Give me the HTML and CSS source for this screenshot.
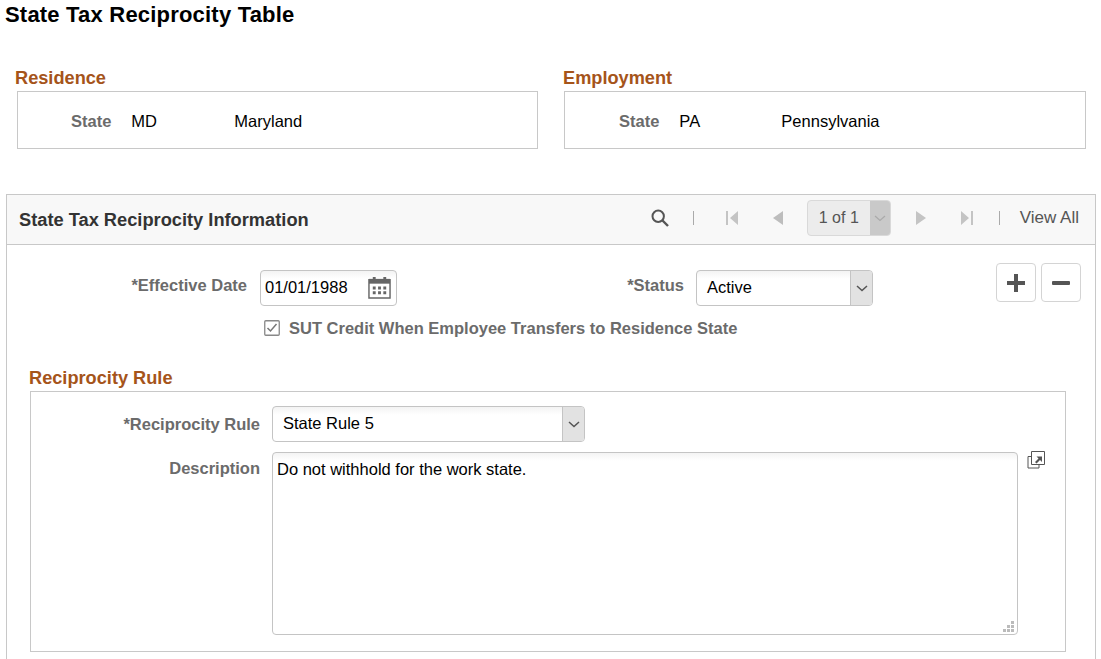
FILE: index.html
```html
<!doctype html>
<html>
<head>
<meta charset="utf-8">
<title>State Tax Reciprocity Table</title>
<link rel="stylesheet" href="styles.css">
</head>
<body>
	<h1 class="pageTitle">State Tax Reciprocity Table</h1>
	<div class="topGroups">
		<div class="group">
			<h2 class="groupTitle">Residence</h2>
			<div class="groupBox">
				<span class="lbl">State</span>
				<span class="code">MD</span>
				<span>Maryland</span>
			</div>
		</div>
		<div class="group">
			<h2 class="groupTitle">Employment</h2>
			<div class="groupBox">
				<span class="lbl">State</span>
				<span class="code">PA</span>
				<span>Pennsylvania</span>
			</div>
		</div>
	</div>
	<div class="panel">
		<div class="panelHead">
			<h2 class="panelTitle">State Tax Reciprocity Information</h2>
			<div class="pager">
				<svg class="searchIcon" width="18" height="18" viewBox="0 0 18 18"><circle cx="7.2" cy="7.2" r="5.7" fill="none" stroke="#555" stroke-width="2"/><path d="M11.5 11.5L17 17" stroke="#555" stroke-width="2.4"/></svg>
				<i class="pipe first"></i>
				<svg class="navFirst" width="12" height="14" viewBox="0 0 12 14"><path d="M0 0h2v14H0zM12 0v14L4 7z" fill="#c4c4c4"/></svg>
				<svg class="navPrev" width="10" height="14" viewBox="0 0 10 14"><path d="M10 0v14L0 7z" fill="#bdbdbd"/></svg>
				<div class="pageSelect"><span class="pageText">1 of 1</span><span class="pageArrow"><svg width="12" height="7" viewBox="0 0 12 7"><path d="M1 1l5 4.5L11 1" fill="none" stroke="#aaa" stroke-width="1.2"/></svg></span></div>
				<svg class="navNext" width="10" height="14" viewBox="0 0 10 14"><path d="M0 0v14l10-7z" fill="#c4c4c4"/></svg>
				<svg class="navLast" width="12" height="14" viewBox="0 0 12 14"><path d="M0 0v14l8-7zM10 0h2v14h-2z" fill="#c4c4c4"/></svg>
				<i class="pipe last"></i>
				<span class="viewAll">View All</span>
			</div>
		</div>
		<div class="panelBody">
			<div class="rowMain">
				<label class="lbl dateLbl">*Effective Date</label>
				<div class="field dateField">
					<span>01/01/1988</span>
					<svg width="23" height="23" viewBox="0 0 24 24"><path d="M1 4h22v19H1z" fill="#fff" stroke="#666" stroke-width="1.5"/><path d="M1 3h22v5H1z" fill="#666"/><path d="M5 1h3v4H5zM16 1h3v4h-3z" fill="#666"/><path d="M5 11h3v3H5zM10.500 11h3v3h-3zM16 11h3v3h-3zM5 16h3v3H5zM10.500 16h3v3h-3zM16 16h3v3h-3z" fill="#666"/></svg>
				</div>
				<label class="lbl statusLbl">*Status</label>
				<div class="field selectField statusField">
					<span class="fieldText">Active</span>
					<span class="selArrow"><svg width="12" height="7" viewBox="0 0 12 7"><path d="M1 1l5 4.500L11 1" fill="none" stroke="#555" stroke-width="1.500"/></svg></span>
				</div>
				<div class="rowBtns">
					<div class="rowBtn"><svg width="18" height="18" viewBox="0 0 18 18"><path d="M7 0h4v7h7v4h-7v7H7v-7H0V7h7z" fill="#555"/></svg></div>
					<div class="rowBtn"><svg width="18" height="4" viewBox="0 0 18 4"><rect width="18" height="4" rx="1" fill="#555"/></svg></div>
				</div>
			</div>
			<div class="checkRow">
				<svg width="16" height="16" viewBox="0 0 16 16"><rect x=".75" y=".75" width="14.500" height="14.500" rx="1" fill="#fff" stroke="#888" stroke-width="1.300"/><path d="M3.500 8l3 3 6-7" fill="none" stroke="#777" stroke-width="1.500"/></svg>
				<span class="lbl">SUT Credit When Employee Transfers to Residence State</span>
			</div>
			<h2 class="groupTitle ruleTitle">Reciprocity Rule</h2>
			<div class="ruleBox">
				<div class="ruleRow">
					<label class="lbl ruleLbl">*Reciprocity Rule</label>
					<div class="field selectField ruleField">
						<span class="fieldText">State Rule 5</span>
						<span class="selArrow"><svg width="12" height="7" viewBox="0 0 12 7"><path d="M1 1l5 4.500L11 1" fill="none" stroke="#555" stroke-width="1.500"/></svg></span>
					</div>
				</div>
				<div class="descRow">
					<label class="lbl ruleLbl descLbl">Description</label>
					<div class="descArea">
						Do not withhold for the work state.
						<svg class="grip" width="12" height="12" viewBox="0 0 12 12"><path d="M8 0h3v3H8zM4 4h3v3H4zM8 4h3v3H8zM0 8h3v3H0zM4 8h3v3H4zM8 8h3v3H8z" fill="#bbb"/></svg>
					</div>
					<svg class="popIcon" width="18" height="18" viewBox="0 0 18 18"><path d="M1 5.500h11v11.500H1z" fill="#fff" stroke="#555"/><path d="M4.500 .5h13v13h-13z" fill="#fff" stroke="#555"/><path d="M8 11l3.500-3.500L9.500 5.500H15V11l-2-2-3.500 3.500z" fill="#555"/></svg>
				</div>
			</div>
		</div>
	</div>
</body>
</html>
```

FILE: styles.css
```css
html,
body {
	height: 659px;
	overflow: hidden;
}
body {
	margin: 0;
	background: #fff;
	color: #000;
	font: 16.5px/20px "Liberation Sans", Arial, sans-serif;
}
h1,
h2 {
	margin: 0;
}
svg {
	flex: none;
}
.pageTitle {
	padding: 3px 0 0 5px;
	height: 27px;
	font-size: 22px;
	line-height: 24px;
	letter-spacing: .2px;
}
.lbl {
	font-weight: bold;
	color: #6b6b6b;
}
.topGroups {
	display: flex;
	margin-top: 38px;
	height: 126px;
}
.group {
	flex: none;
	width: 548px;
	padding-left: 15px;
}
.group + .group {
	width: 538px;
	padding-left: 0;
}
.groupTitle {
	font-size: 18.2px;
	line-height: 20px;
	color: #a5541a;
}
.groupBox {
	display: flex;
	align-items: center;
	box-sizing: border-box;
	height: 58px;
	width: 521px;
	margin: 3px 0 0 2px;
	padding: 2px 0 0 53px;
	border: 1px solid #c8c8c8;
}
.group + .group .groupBox {
	width: 522px;
	margin-left: 1px;
	padding-left: 54px;
}
.code {
	width: 103px;
	margin-left: 20px;
}
.group + .group .code {
	width: 102px;
}
.panel {
	box-sizing: border-box;
	width: 1090px;
	height: 480px;
	margin-left: 6px;
	border: 1px solid #c8c8c8;
}
.panelHead {
	display: flex;
	align-items: center;
	justify-content: space-between;
	box-sizing: border-box;
	height: 50px;
	padding: 0 16px 0 12px;
	background: #f8f8f8;
	border-bottom: 1px solid #c8c8c8;
}
.panelTitle {
	font-size: 18.25px;
	color: #333;
}
.pager {
	display: flex;
	align-items: center;
	padding-bottom: 3px;
	color: #555;
}
.viewAll {
	font-size: 17px;
}
.pipe {
	width: 1px;
	height: 14px;
	background: #aaa;
}
.pipe.first {
	margin: 0 32px 0 24px;
}
.pipe.last {
	margin: 0 20px 0 26px;
}
.navPrev {
	margin: 0 24px 0 35px;
}
.navNext {
	margin: 0 35px 0 25px;
}
.pageSelect {
	display: flex;
	box-sizing: border-box;
	width: 84px;
	height: 36px;
	background: #ececec;
	border: 1px solid #d9d9d9;
	border-radius: 4px;
	overflow: hidden;
}
.pageText {
	width: 62px;
	font-size: 16px;
	text-align: center;
	line-height: 34px;
	color: #555;
}
.pageArrow {
	display: flex;
	align-items: center;
	justify-content: center;
	flex: 1;
	background: #c9c9c9;
}
.panelBody {
	padding: 18px 0 0 23px;
}
.rowMain {
	display: flex;
	align-items: flex-start;
}
.rowMain > * {
	flex: none;
}
.rowMain .lbl {
	line-height: 20px;
	margin-top: 12px;
}
.dateLbl {
	width: 217px;
	text-align: right;
}
.field {
	display: flex;
	align-items: center;
	justify-content: space-between;
	box-sizing: border-box;
	height: 36px;
	background: linear-gradient(#f3f3f3, #fff 8px);
	border: 1px solid #c4c4c4;
	border-radius: 4px;
}
.fieldText {
	padding-bottom: 2px;
}
.dateField {
	width: 137px;
	margin: 7px 0 0 13px;
	padding: 0 5px 2px 4px;
}
.statusLbl {
	width: 287px;
	text-align: right;
}
.selectField {
	padding-left: 10px;
	overflow: hidden;
}
.statusField {
	width: 177px;
	margin: 7px 0 0 12px;
}
.selArrow {
	display: flex;
	align-items: center;
	justify-content: center;
	align-self: stretch;
	width: 21px;
	background: #e2e2e2;
	border-left: 1px solid #c4c4c4;
}
.rowBtns {
	display: flex;
	gap: 5px;
	margin-left: 123px;
}
.rowBtn {
	display: flex;
	align-items: center;
	justify-content: center;
	box-sizing: border-box;
	width: 40px;
	height: 39px;
	background: #fff;
	border: 1px solid #d4d4d4;
	border-radius: 4px;
}
.checkRow {
	display: flex;
	align-items: center;
	gap: 9px;
	margin: 12px 0 0 234px;
}
.ruleTitle {
	margin: 30px 0 0 -1px;
}
.ruleBox {
	box-sizing: border-box;
	height: 261px;
	width: 1036px;
	margin-top: 3px;
	padding-top: 14px;
	border: 1px solid #c8c8c8;
}
.ruleRow,
.descRow {
	display: flex;
	align-items: center;
}
.descRow {
	align-items: flex-start;
	margin-top: 10px;
}
.ruleLbl {
	flex: none;
	width: 229px;
	text-align: right;
}
.ruleField {
	flex: none;
	width: 313px;
	margin-left: 12px;
}
.descLbl {
	margin-top: 6px;
}
.descArea {
	flex: none;
	position: relative;
	box-sizing: border-box;
	width: 746px;
	height: 183px;
	margin-left: 12px;
	padding: 6px 4px;
	background: linear-gradient(#f3f3f3, #fff 8px);
	border: 1px solid #c4c4c4;
	border-radius: 4px;
}
.grip {
	position: absolute;
	right: 2px;
	bottom: 1px;
}
.popIcon {
	margin: -1px 0 0 9px;
}
```
